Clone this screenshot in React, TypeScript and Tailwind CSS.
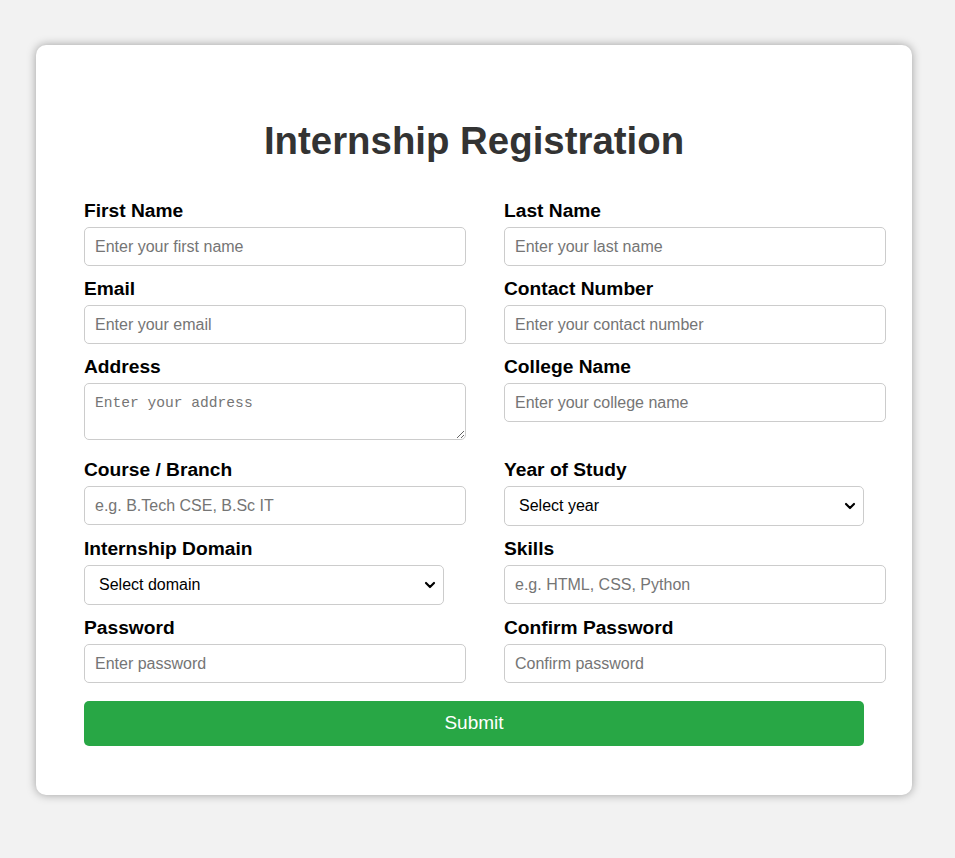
import { useState } from 'react';
import { ChevronDown } from 'lucide-react';

const sans = { fontFamily: '"Liberation Sans", Arial, sans-serif' };

const inputCls =
  'box-content w-full px-[10px] py-[10px] h-[17px] border border-[#ccc] rounded-[5px] text-[16px] leading-[17px] bg-white text-black placeholder:text-[#757575] outline-none';
const selectCls =
  'appearance-none w-full h-[40px] pl-[14px] pr-[30px] border border-[#ccc] rounded-[5px] text-[16px] bg-white text-black outline-none';

function Field({ label, children }: { label: string; children: React.ReactNode }) {
  return (
    <div className="mb-[12px]">
      <label className="block text-[19.2px] font-bold text-black mb-[5px] leading-[22px]">{label}</label>
      {children}
    </div>
  );
}

function Select({ value, onChange, options }: { value: string; onChange: (e: { target: { value: string } }) => void; options: string[] }) {
  return (
    <div className="relative">
      <select className={selectCls} value={value} onChange={onChange}>
        {options.map((o, i) => (
          <option key={o} value={i === 0 ? '' : o}>
            {o}
          </option>
        ))}
      </select>
      <ChevronDown
        className="absolute right-[6px] top-1/2 -translate-y-1/2 pointer-events-none text-black"
        size={16}
        strokeWidth={3.2}
      />
    </div>
  );
}

export default function App() {
  const [form, setForm] = useState({
    firstName: '',
    lastName: '',
    email: '',
    contact: '',
    address: '',
    college: '',
    course: '',
    year: '',
    domain: '',
    skills: '',
    password: '',
    confirm: '',
  });

  const set = (k: keyof typeof form) => (e: { target: { value: string } }) =>
    setForm({ ...form, [k]: e.target.value });

  return (
    <div className="min-h-[858px] bg-[#f2f2f2] pt-[45px] pb-[63px]" style={sans}>
      <div className="ml-[36px] w-[876px] bg-white rounded-[10px] shadow-[0_0_10px_rgba(0,0,0,0.35)] px-[48px] pt-[48px] pb-[49px]">
        <h1 className="text-center text-[38.4px] font-bold text-[#333] leading-[44px] mt-[26px] mb-[37px]">
          Internship Registration
        </h1>
        <form onSubmit={(e) => e.preventDefault()}>
          <div className="grid grid-cols-[360px_360px] gap-x-[60px]">
            <Field label="First Name">
              <input className={inputCls} placeholder="Enter your first name" value={form.firstName} onChange={set('firstName')} />
            </Field>
            <Field label="Last Name">
              <input className={inputCls} placeholder="Enter your last name" value={form.lastName} onChange={set('lastName')} />
            </Field>
            <Field label="Email">
              <input className={inputCls} placeholder="Enter your email" value={form.email} onChange={set('email')} />
            </Field>
            <Field label="Contact Number">
              <input className={inputCls} placeholder="Enter your contact number" value={form.contact} onChange={set('contact')} />
            </Field>
            <Field label="Address">
              <textarea
                className="box-content w-full h-[35px] p-[10px] border border-[#ccc] rounded-[5px] text-[14.6px] leading-[18px] bg-white text-black placeholder:text-[#757575] outline-none align-baseline"
                style={{ fontFamily: '"Liberation Mono", monospace' }}
                placeholder="Enter your address"
                value={form.address}
                onChange={set('address')}
              />
            </Field>
            <Field label="College Name">
              <input className={inputCls} placeholder="Enter your college name" value={form.college} onChange={set('college')} />
            </Field>
            <Field label="Course / Branch">
              <input className={inputCls} placeholder="e.g. B.Tech CSE, B.Sc IT" value={form.course} onChange={set('course')} />
            </Field>
            <Field label="Year of Study">
              <Select
                value={form.year}
                onChange={set('year')}
                options={['Select year', '1st Year', '2nd Year', '3rd Year', '4th Year']}
              />
            </Field>
            <Field label="Internship Domain">
              <Select
                value={form.domain}
                onChange={set('domain')}
                options={['Select domain', 'Web Development', 'Data Science', 'Machine Learning', 'UI/UX Design']}
              />
            </Field>
            <Field label="Skills">
              <input className={inputCls} placeholder="e.g. HTML, CSS, Python" value={form.skills} onChange={set('skills')} />
            </Field>
            <Field label="Password">
              <input type="password" className={inputCls} placeholder="Enter password" value={form.password} onChange={set('password')} />
            </Field>
            <Field label="Confirm Password">
              <input type="password" className={inputCls} placeholder="Confirm password" value={form.confirm} onChange={set('confirm')} />
            </Field>
          </div>
          <button
            type="submit"
            className="mt-[6px] w-full h-[45px] bg-[#28a745] text-white text-[19px] rounded-[5px] cursor-pointer"
          >
            Submit
          </button>
        </form>
      </div>
    </div>
  );
}
